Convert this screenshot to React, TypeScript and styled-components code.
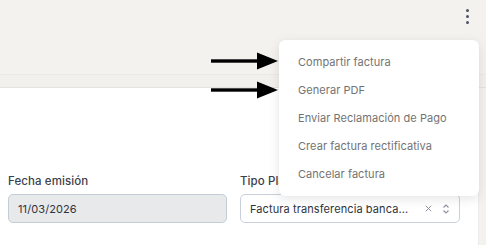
import React from 'react';
import styled, { createGlobalStyle } from 'styled-components';

const GlobalStyle = createGlobalStyle`
  html, body {
    margin: 0;
    padding: 0;
    background: #f3f2ef;
    font-family: 'Inter', 'Noto Sans', sans-serif;
    overflow: hidden;
  }
`;

const Page = styled.div`
  position: relative;
  width: 486px;
  height: 245px;
  display: flex;
  flex-direction: column;
`;

const TopBar = styled.div`
  height: 75px;
  display: flex;
  justify-content: flex-end;
  align-items: flex-start;
  padding: 9px 16px 0 0;
  box-sizing: border-box;
  border-bottom: 1px solid #ebeae7;
`;

const DotsButton = styled.button`
  background: none;
  border: none;
  padding: 0;
  width: 6px;
  height: 15px;
  display: flex;
  flex-direction: column;
  justify-content: space-between;
  align-items: center;
  cursor: pointer;
`;

const Dot = styled.span`
  width: 3px;
  height: 3px;
  border-radius: 50%;
  background: #4b5263;
`;

const SubBar = styled.div`
  height: 12px;
  background: #f1f0ed;
  border-bottom: 1px solid #e4e3e0;
`;

const Body = styled.div`
  flex: 1;
  display: flex;
`;

const Card = styled.div`
  width: 479px;
  background: #ffffff;
  border-right: 1px solid #ecebe8;
  box-sizing: border-box;
  padding: 86px 0 0 8px;
`;

const FormRow = styled.div`
  display: grid;
  grid-template-columns: 219px 220px;
  column-gap: 13px;
`;

const Field = styled.div`
  display: flex;
  flex-direction: column;
  gap: 6px;
`;

const Label = styled.label`
  font-size: 11.5px;
  font-weight: 500;
  color: #3b404c;
  letter-spacing: 0.1px;
`;

const Input = styled.div<{ disabled?: boolean }>`
  height: 29px;
  box-sizing: border-box;
  border: 1px solid ${({ disabled }) => (disabled ? '#c4ccd6' : '#c9d0da')};
  background: ${({ disabled }) => (disabled ? '#e8e9eb' : '#ffffff')};
  border-radius: 5px;
  display: flex;
  align-items: center;
  padding: 0 9px 0 9px;
  font-size: 11px;
  color: #2e333d;
  letter-spacing: 0.1px;
`;

const SelectText = styled.span`
  flex: 1;
  white-space: nowrap;
  overflow: hidden;
`;

const SelectIcons = styled.span`
  display: flex;
  align-items: center;
  gap: 9px;
  color: #8c93a0;
`;

const Menu = styled.div`
  position: absolute;
  top: 40px;
  right: 7px;
  width: 200px;
  padding: 8px 0;
  background: #ffffff;
  border-radius: 6px;
  box-shadow: 0 3px 12px rgba(0, 0, 0, 0.1), 0 0 1px rgba(0, 0, 0, 0.06);
  box-sizing: border-box;
`;

const MenuItem = styled.div`
  height: 28px;
  display: flex;
  align-items: center;
  padding-left: 19px;
  font-size: 11px;
  color: #737373;
  letter-spacing: 0.05px;
`;

const Arrow = styled.svg<{ top: number }>`
  position: absolute;
  left: 211px;
  top: ${({ top }) => top}px;
`;

const menuItems = [
  'Compartir factura',
  'Generar PDF',
  'Enviar Reclamación de Pago',
  'Crear factura rectificativa',
  'Cancelar factura',
];

const ArrowIcon: React.FC<{ top: number }> = ({ top }) => (
  <Arrow top={top} width="68" height="18" viewBox="0 0 68 18">
    <rect x="0" y="7.3" width="50" height="3.4" fill="#000" />
    <polygon points="46,0.5 67,9 46,17.5" fill="#000" />
  </Arrow>
);

export default function App() {
  return (
    <>
      <GlobalStyle />
      <Page>
        <TopBar>
          <DotsButton>
            <Dot />
            <Dot />
            <Dot />
          </DotsButton>
        </TopBar>
        <SubBar />
        <Body>
          <Card>
            <FormRow>
              <Field>
                <Label>Fecha emisión</Label>
                <Input disabled>11/03/2026</Input>
              </Field>
              <Field>
                <Label>Tipo Plantilla</Label>
                <Input>
                  <SelectText>Factura transferencia banca...</SelectText>
                  <SelectIcons>
                    <svg width="9" height="9" viewBox="0 0 10 10">
                      <path d="M2 2 L8 8 M8 2 L2 8" stroke="currentColor" strokeWidth="1.1" />
                    </svg>
                    <svg width="8" height="12" viewBox="0 0 8 12">
                      <path d="M1.5 4.5 L4 2 L6.5 4.5 M1.5 7.5 L4 10 L6.5 7.5" stroke="currentColor" strokeWidth="1.1" fill="none" />
                    </svg>
                  </SelectIcons>
                </Input>
              </Field>
            </FormRow>
          </Card>
        </Body>
        <Menu>
          {menuItems.map((item) => (
            <MenuItem key={item}>{item}</MenuItem>
          ))}
        </Menu>
        <ArrowIcon top={52} />
        <ArrowIcon top={81} />
      </Page>
    </>
  );
}
